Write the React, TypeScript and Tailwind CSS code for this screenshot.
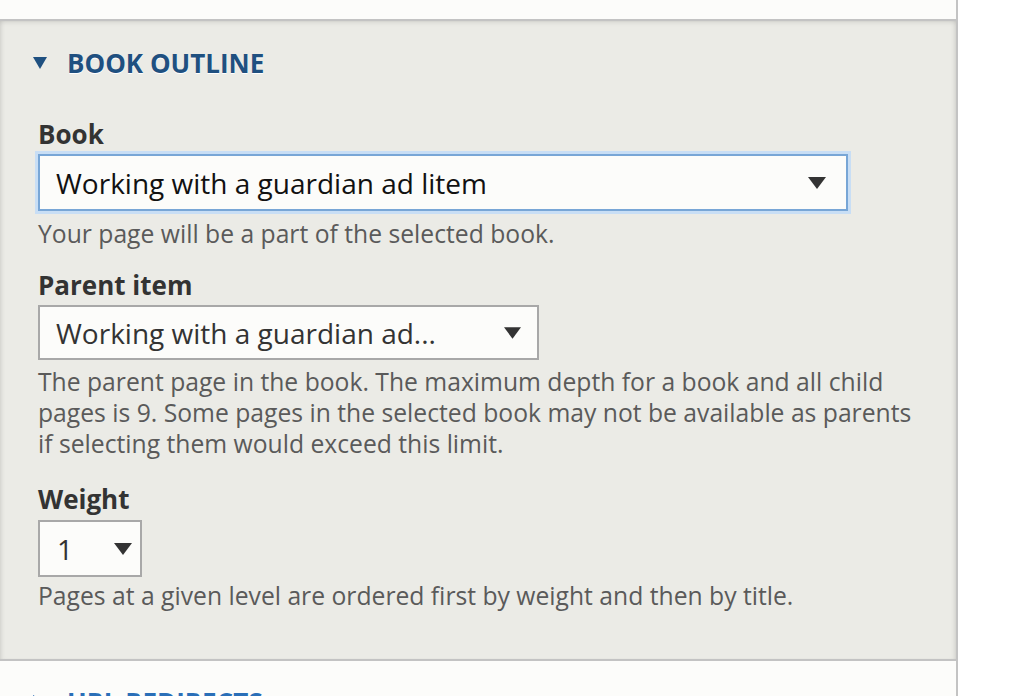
import React from "react";

const Caret: React.FC<{ className?: string }> = ({ className }) => (
  <svg viewBox="0 0 18 12" className={className}>
    <path d="M0 0h18L9 12z" fill="#333" />
  </svg>
);

const Field: React.FC<{ label: string; children: React.ReactNode; help: React.ReactNode; className?: string }> = ({
  label,
  children,
  help,
  className,
}) => (
  <div className={className}>
    <div className="text-[26px] leading-[32px] font-bold text-[#333]">{label}</div>
    {children}
    <div className="text-[24.7px] leading-[31px] text-[#5a5a5a]">{help}</div>
  </div>
);

export default function App() {
  return (
    <div className="w-[1012px] h-[696px] overflow-hidden bg-white font-['Open_Sans',sans-serif]">
      <div className="w-[958px] h-full border-r-2 border-[#c3c3c3] bg-[#fcfcfa]">
        <div className="h-[19px]" />
        <div className="border-y-2 border-[#c3c3c3] bg-[#ebebe6] shadow-[inset_0_3px_5px_-2px_rgba(0,0,0,0.12),inset_4px_0_5px_-3px_rgba(0,0,0,0.1),inset_-4px_0_5px_-3px_rgba(0,0,0,0.1)] pt-[24px] pb-[48px] pl-[33px]">
          <div className="flex items-center h-[36px] text-[26px] font-bold uppercase text-[#1f5080] [text-shadow:0_1px_0_#fff]">
            <svg viewBox="0 0 14 12" className="w-[14px] h-[12px] mr-[20px]">
              <path d="M0 0h14L7 12z" fill="#1f5080" />
            </svg>
            Book Outline
          </div>

          <div className="pl-[5px]">
            <Field label="Book" className="mt-[37px]" help="Your page will be a part of the selected book.">
              <div className="mt-[4px] mb-[7px] w-[810px] h-[57px] flex items-center justify-between pl-[16px] pr-[20px] bg-[#fcfcfa] border-2 border-[#78a6d6] ring-[3px] ring-[#c8def5] text-[28px] text-[#111]">
                <span>Working with a guardian ad litem</span>
                <Caret className="w-[18px] h-[12px]" />
              </div>
            </Field>

            <Field
              label="Parent item"
              className="mt-[20px]"
              help={
                <>
                  The parent page in the book. The maximum depth for a book and all child
                  <br />
                  pages is 9. Some pages in the selected book may not be available as parents
                  <br />
                  if selecting them would exceed this limit.
                </>
              }
            >
              <div className="mt-[4px] mb-[6px] w-[501px] h-[55px] flex items-center justify-between pl-[16px] pr-[16px] bg-[#fcfcfa] border-2 border-[#a8a8a8] text-[28px] text-[#333]">
                <span>Working with a guardian ad...</span>
                <Caret className="w-[17px] h-[12px]" />
              </div>
            </Field>

            <Field
              label="Weight"
              className="mt-[24px]"
              help="Pages at a given level are ordered first by weight and then by title."
            >
              <div className="mt-[5px] mb-[3px] w-[104px] h-[57px] flex items-center justify-between pl-[17px] pr-[8px] bg-[#fcfcfa] border-2 border-[#a8a8a8] text-[28px] text-[#333]">
                <span>1</span>
                <Caret className="w-[18px] h-[12px]" />
              </div>
            </Field>
          </div>
        </div>

        <div className="pt-[23px] pl-[33px]">
          <div className="flex items-center h-[36px] text-[26px] font-bold uppercase text-[#2a6fb8]">
            <svg viewBox="0 0 12 14" className="w-[12px] h-[14px] mr-[22px]">
              <path d="M0 0v14l12-7z" fill="#2a6fb8" />
            </svg>
            URL redirects
          </div>
        </div>
      </div>
    </div>
  );
}
